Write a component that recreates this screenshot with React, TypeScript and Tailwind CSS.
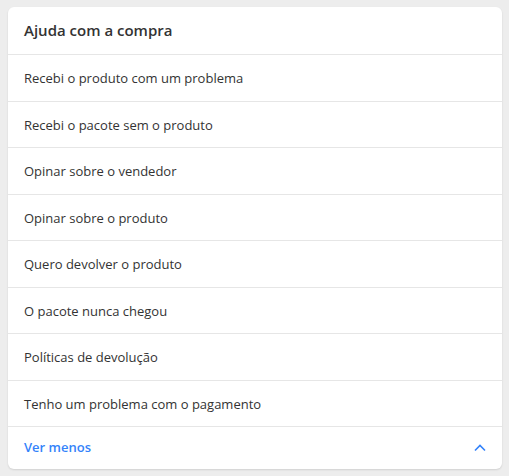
import React from "react";

const items = [
  "Recebi o produto com um problema",
  "Recebi o pacote sem o produto",
  "Opinar sobre o vendedor",
  "Opinar sobre o produto",
  "Quero devolver o produto",
  "O pacote nunca chegou",
  "Políticas de devolução",
  "Tenho um problema com o pagamento",
];

export default function App() {
  return (
    <div
      className="w-[509px] h-[476px] bg-[#ededed] pt-[7px] px-[8px]"
      style={{ fontFamily: '"Open Sans", "Noto Sans", sans-serif' }}
    >
      <div className="w-[494px] bg-white rounded-[6px] shadow-[0_1px_2px_rgba(0,0,0,0.12)] overflow-hidden">
        <div className="h-[47px] flex items-center px-[16px] text-[15px] font-semibold text-[#333]">
          Ajuda com a compra
        </div>
        {items.map((t) => (
          <div
            key={t}
            className="h-[46.5px] box-border border-t border-[#e6e6e6] flex items-center px-[16px] pt-[2px] text-[13px] text-[#333]"
          >
            {t}
          </div>
        ))}
        <div className="h-[43px] box-border border-t border-[#e6e6e6] flex items-center justify-between px-[16px] pr-[16px]">
          <span className="text-[13px] font-semibold text-[#3483fa]">Ver menos</span>
          <svg width="12" height="8" viewBox="0 0 12 8" fill="none">
            <path d="M1 6.5 L6 1.5 L11 6.5" stroke="#3483fa" strokeWidth="1.6" />
          </svg>
        </div>
      </div>
    </div>
  );
}
